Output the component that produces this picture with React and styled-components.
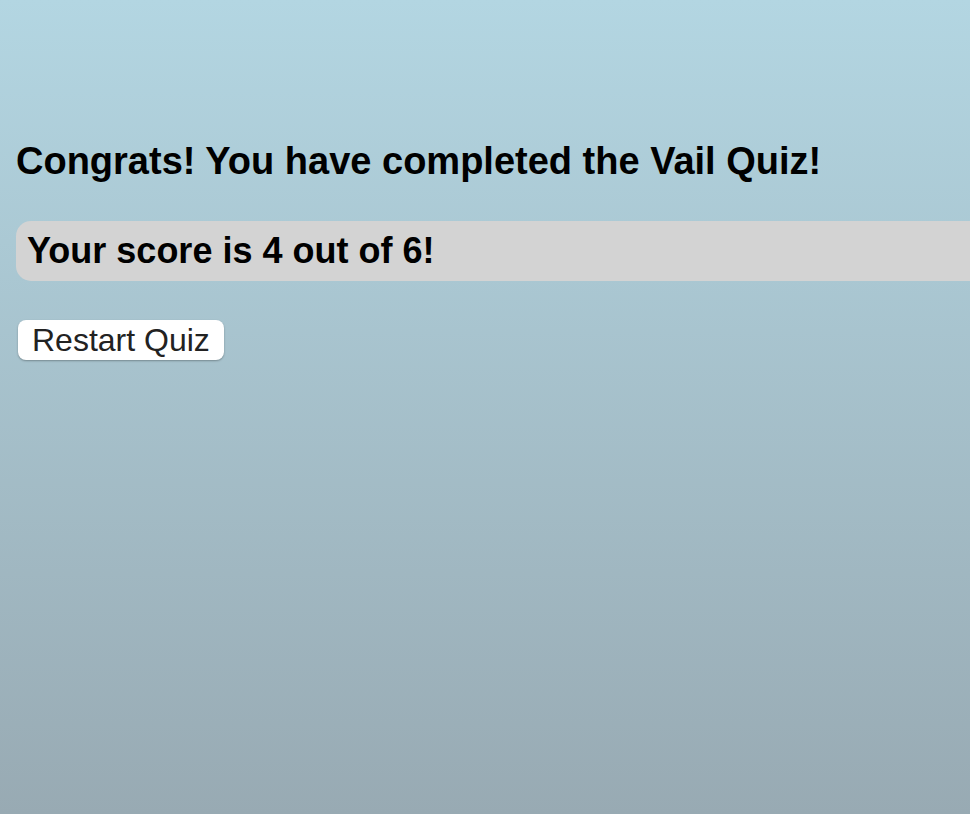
import React from "react";
import styled, { createGlobalStyle } from "styled-components";

const GlobalStyle = createGlobalStyle`
  html, body {
    margin: 0;
    min-height: 100%;
  }
  body {
    font-family: "Liberation Sans", Arial, sans-serif;
    background: linear-gradient(#b3d6e2, #98aab3);
    min-height: 814px;
    overflow: hidden;
  }
`;

const Page = styled.div`
  padding: 16px 0 0 16px;
  width: 1000px;
`;

const Title = styled.h1`
  margin: 124px 0 0 0;
  font-size: 38px;
  font-weight: bold;
  color: #000;
`;

const ScoreBox = styled.div`
  margin-top: 38px;
  height: 60px;
  display: flex;
  align-items: center;
  padding: 0 11px;
  background: #d3d3d3;
  border-radius: 15px;
`;

const Score = styled.h2`
  margin: 0;
  font-size: 36px;
  font-weight: bold;
  color: #000;
`;

const RestartButton = styled.button`
  margin: 39px 0 0 2px;
  height: 40px;
  padding: 0 14px;
  font-family: "Liberation Sans", Arial, sans-serif;
  font-size: 32px;
  color: #222;
  background: #fff;
  border: none;
  border-radius: 8px;
  box-shadow: 0 1px 2px rgba(0, 0, 0, 0.3);
  cursor: pointer;
`;

export default function App() {
  return (
    <>
      <GlobalStyle />
      <Page>
        <Title>Congrats! You have completed the Vail Quiz!</Title>
        <ScoreBox>
          <Score>Your score is 4 out of 6!</Score>
        </ScoreBox>
        <RestartButton>Restart Quiz</RestartButton>
      </Page>
    </>
  );
}
